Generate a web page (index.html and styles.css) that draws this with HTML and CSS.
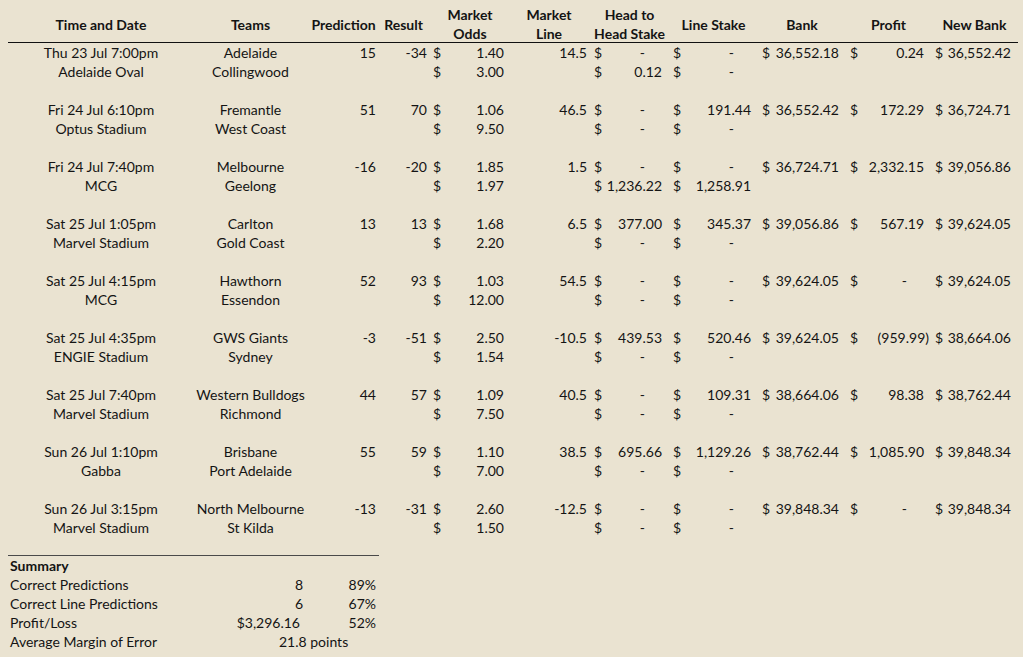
FILE: index.html
```html
<!DOCTYPE html>
<html lang="en">
<head>
<meta charset="utf-8">
<title>Betting tracker</title>
<link rel="stylesheet" href="styles.css">
</head>
<body>
<div class="sheet">
  <div class="row head">
    <div class="c">Time and Date</div>
    <div class="c">Teams</div>
    <div class="c">Prediction</div>
    <div class="c">Result</div>
    <div class="c">Market<br>Odds</div>
    <div class="c">Market<br>Line</div>
    <div class="c">Head to<br>Head Stake</div>
    <div class="c">Line Stake</div>
    <div class="c">Bank</div>
    <div class="c">Profit</div>
    <div class="c">New Bank</div>
  </div>

  <div class="game">
    <div class="row">
      <div class="c ctr">Thu 23 Jul 7:00pm</div><div class="c ctr">Adelaide</div><div class="c num">15</div><div class="c num">-34</div>
      <div class="c acc"><span>$</span><span>1.40</span></div><div class="c num">14.5</div>
      <div class="c acc"><span>$</span><span class="z">-</span></div><div class="c acc"><span>$</span><span class="z">-</span></div>
      <div class="c acc"><span>$</span><span>36,552.18</span></div><div class="c acc"><span>$</span><span>0.24</span></div><div class="c acc"><span>$</span><span>36,552.42</span></div>
    </div>
    <div class="row">
      <div class="c ctr">Adelaide Oval</div><div class="c ctr">Collingwood</div><div class="c"></div><div class="c"></div>
      <div class="c acc"><span>$</span><span>3.00</span></div><div class="c"></div>
      <div class="c acc"><span>$</span><span>0.12</span></div><div class="c acc"><span>$</span><span class="z">-</span></div>
      <div class="c"></div><div class="c"></div><div class="c"></div>
    </div>
  </div>

  <div class="game">
    <div class="row">
      <div class="c ctr">Fri 24 Jul 6:10pm</div><div class="c ctr">Fremantle</div><div class="c num">51</div><div class="c num">70</div>
      <div class="c acc"><span>$</span><span>1.06</span></div><div class="c num">46.5</div>
      <div class="c acc"><span>$</span><span class="z">-</span></div><div class="c acc"><span>$</span><span>191.44</span></div>
      <div class="c acc"><span>$</span><span>36,552.42</span></div><div class="c acc"><span>$</span><span>172.29</span></div><div class="c acc"><span>$</span><span>36,724.71</span></div>
    </div>
    <div class="row">
      <div class="c ctr">Optus Stadium</div><div class="c ctr">West Coast</div><div class="c"></div><div class="c"></div>
      <div class="c acc"><span>$</span><span>9.50</span></div><div class="c"></div>
      <div class="c acc"><span>$</span><span class="z">-</span></div><div class="c acc"><span>$</span><span class="z">-</span></div>
      <div class="c"></div><div class="c"></div><div class="c"></div>
    </div>
  </div>

  <div class="game">
    <div class="row">
      <div class="c ctr">Fri 24 Jul 7:40pm</div><div class="c ctr">Melbourne</div><div class="c num">-16</div><div class="c num">-20</div>
      <div class="c acc"><span>$</span><span>1.85</span></div><div class="c num">1.5</div>
      <div class="c acc"><span>$</span><span class="z">-</span></div><div class="c acc"><span>$</span><span class="z">-</span></div>
      <div class="c acc"><span>$</span><span>36,724.71</span></div><div class="c acc"><span>$</span><span>2,332.15</span></div><div class="c acc"><span>$</span><span>39,056.86</span></div>
    </div>
    <div class="row">
      <div class="c ctr">MCG</div><div class="c ctr">Geelong</div><div class="c"></div><div class="c"></div>
      <div class="c acc"><span>$</span><span>1.97</span></div><div class="c"></div>
      <div class="c acc"><span>$</span><span>1,236.22</span></div><div class="c acc"><span>$</span><span>1,258.91</span></div>
      <div class="c"></div><div class="c"></div><div class="c"></div>
    </div>
  </div>

  <div class="game">
    <div class="row">
      <div class="c ctr">Sat 25 Jul 1:05pm</div><div class="c ctr">Carlton</div><div class="c num">13</div><div class="c num">13</div>
      <div class="c acc"><span>$</span><span>1.68</span></div><div class="c num">6.5</div>
      <div class="c acc"><span>$</span><span>377.00</span></div><div class="c acc"><span>$</span><span>345.37</span></div>
      <div class="c acc"><span>$</span><span>39,056.86</span></div><div class="c acc"><span>$</span><span>567.19</span></div><div class="c acc"><span>$</span><span>39,624.05</span></div>
    </div>
    <div class="row">
      <div class="c ctr">Marvel Stadium</div><div class="c ctr">Gold Coast</div><div class="c"></div><div class="c"></div>
      <div class="c acc"><span>$</span><span>2.20</span></div><div class="c"></div>
      <div class="c acc"><span>$</span><span class="z">-</span></div><div class="c acc"><span>$</span><span class="z">-</span></div>
      <div class="c"></div><div class="c"></div><div class="c"></div>
    </div>
  </div>

  <div class="game">
    <div class="row">
      <div class="c ctr">Sat 25 Jul 4:15pm</div><div class="c ctr">Hawthorn</div><div class="c num">52</div><div class="c num">93</div>
      <div class="c acc"><span>$</span><span>1.03</span></div><div class="c num">54.5</div>
      <div class="c acc"><span>$</span><span class="z">-</span></div><div class="c acc"><span>$</span><span class="z">-</span></div>
      <div class="c acc"><span>$</span><span>39,624.05</span></div><div class="c acc"><span>$</span><span class="z">-</span></div><div class="c acc"><span>$</span><span>39,624.05</span></div>
    </div>
    <div class="row">
      <div class="c ctr">MCG</div><div class="c ctr">Essendon</div><div class="c"></div><div class="c"></div>
      <div class="c acc"><span>$</span><span>12.00</span></div><div class="c"></div>
      <div class="c acc"><span>$</span><span class="z">-</span></div><div class="c acc"><span>$</span><span class="z">-</span></div>
      <div class="c"></div><div class="c"></div><div class="c"></div>
    </div>
  </div>

  <div class="game">
    <div class="row">
      <div class="c ctr">Sat 25 Jul 4:35pm</div><div class="c ctr">GWS Giants</div><div class="c num">-3</div><div class="c num">-51</div>
      <div class="c acc"><span>$</span><span>2.50</span></div><div class="c num">-10.5</div>
      <div class="c acc"><span>$</span><span>439.53</span></div><div class="c acc"><span>$</span><span>520.46</span></div>
      <div class="c acc"><span>$</span><span>39,624.05</span></div><div class="c acc"><span>$</span><span class="neg">(959.99)</span></div><div class="c acc"><span>$</span><span>38,664.06</span></div>
    </div>
    <div class="row">
      <div class="c ctr">ENGIE Stadium</div><div class="c ctr">Sydney</div><div class="c"></div><div class="c"></div>
      <div class="c acc"><span>$</span><span>1.54</span></div><div class="c"></div>
      <div class="c acc"><span>$</span><span class="z">-</span></div><div class="c acc"><span>$</span><span class="z">-</span></div>
      <div class="c"></div><div class="c"></div><div class="c"></div>
    </div>
  </div>

  <div class="game">
    <div class="row">
      <div class="c ctr">Sat 25 Jul 7:40pm</div><div class="c ctr">Western Bulldogs</div><div class="c num">44</div><div class="c num">57</div>
      <div class="c acc"><span>$</span><span>1.09</span></div><div class="c num">40.5</div>
      <div class="c acc"><span>$</span><span class="z">-</span></div><div class="c acc"><span>$</span><span>109.31</span></div>
      <div class="c acc"><span>$</span><span>38,664.06</span></div><div class="c acc"><span>$</span><span>98.38</span></div><div class="c acc"><span>$</span><span>38,762.44</span></div>
    </div>
    <div class="row">
      <div class="c ctr">Marvel Stadium</div><div class="c ctr">Richmond</div><div class="c"></div><div class="c"></div>
      <div class="c acc"><span>$</span><span>7.50</span></div><div class="c"></div>
      <div class="c acc"><span>$</span><span class="z">-</span></div><div class="c acc"><span>$</span><span class="z">-</span></div>
      <div class="c"></div><div class="c"></div><div class="c"></div>
    </div>
  </div>

  <div class="game">
    <div class="row">
      <div class="c ctr">Sun 26 Jul 1:10pm</div><div class="c ctr">Brisbane</div><div class="c num">55</div><div class="c num">59</div>
      <div class="c acc"><span>$</span><span>1.10</span></div><div class="c num">38.5</div>
      <div class="c acc"><span>$</span><span>695.66</span></div><div class="c acc"><span>$</span><span>1,129.26</span></div>
      <div class="c acc"><span>$</span><span>38,762.44</span></div><div class="c acc"><span>$</span><span>1,085.90</span></div><div class="c acc"><span>$</span><span>39,848.34</span></div>
    </div>
    <div class="row">
      <div class="c ctr">Gabba</div><div class="c ctr">Port Adelaide</div><div class="c"></div><div class="c"></div>
      <div class="c acc"><span>$</span><span>7.00</span></div><div class="c"></div>
      <div class="c acc"><span>$</span><span class="z">-</span></div><div class="c acc"><span>$</span><span class="z">-</span></div>
      <div class="c"></div><div class="c"></div><div class="c"></div>
    </div>
  </div>

  <div class="game">
    <div class="row">
      <div class="c ctr">Sun 26 Jul 3:15pm</div><div class="c ctr">North Melbourne</div><div class="c num">-13</div><div class="c num">-31</div>
      <div class="c acc"><span>$</span><span>2.60</span></div><div class="c num">-12.5</div>
      <div class="c acc"><span>$</span><span class="z">-</span></div><div class="c acc"><span>$</span><span class="z">-</span></div>
      <div class="c acc"><span>$</span><span>39,848.34</span></div><div class="c acc"><span>$</span><span class="z">-</span></div><div class="c acc"><span>$</span><span>39,848.34</span></div>
    </div>
    <div class="row">
      <div class="c ctr">Marvel Stadium</div><div class="c ctr">St Kilda</div><div class="c"></div><div class="c"></div>
      <div class="c acc"><span>$</span><span>1.50</span></div><div class="c"></div>
      <div class="c acc"><span>$</span><span class="z">-</span></div><div class="c acc"><span>$</span><span class="z">-</span></div>
      <div class="c"></div><div class="c"></div><div class="c"></div>
    </div>
  </div>

  <div class="summary">
    <div class="srow"><div class="lbl bold">Summary</div><div></div><div></div></div>
    <div class="srow"><div class="lbl">Correct Predictions</div><div class="sv">8</div><div class="sp">89%</div></div>
    <div class="srow"><div class="lbl">Correct Line Predictions</div><div class="sv">6</div><div class="sp">67%</div></div>
    <div class="srow"><div class="lbl">Profit/Loss</div><div class="sv money">$3,296.16</div><div class="sp">52%</div></div>
    <div class="srow"><div class="lbl">Average Margin of Error</div><div class="span2">21.8 points</div></div>
  </div>
</div>
</body>
</html>
```

FILE: styles.css
```css
html, body {
  margin: 0;
  padding: 0;
  background: #eae3d1;
}

body {
  font-family: Lato, "Open Sans", sans-serif;
  font-size: 14px;
  color: #141414;
}

.sheet {
  padding: 5px 0 0 8px;
  width: 1010px;
}

.row {
  display: grid;
  grid-template-columns: 186px 113px 73px 49px 82px 79px 79px 89px 88px 85px 87px;
  height: 19px;
  line-height: 19px;
  white-space: nowrap;
}

.head {
  box-sizing: border-box;
  height: 38px;
  border-bottom: 1px solid #111;
  font-weight: bold;
  line-height: 19px;
}

.head .c {
  display: flex;
  align-items: center;
  justify-content: center;
  text-align: center;
}

.game {
  padding-bottom: 19px;
}

.ctr {
  text-align: center;
}

.num {
  text-align: right;
  padding-right: 4px;
}

.row .c:nth-child(4) {
  padding-right: 2px;
}

.row .c:nth-child(6) {
  padding-right: 3px;
}

.acc {
  display: flex;
  justify-content: space-between;
  padding: 0 7px 0 4px;
}

.z {
  padding-right: 17px;
}

.neg {
  margin-right: -5px;
}

.summary {
  width: 371px;
  margin-top: -1px;
  border-top: 1px solid #4a4a4a;
}

.srow {
  display: grid;
  grid-template-columns: 186px 113px 72px;
  height: 19px;
  line-height: 19px;
  white-space: nowrap;
}

.lbl {
  padding-left: 2px;
}

.bold {
  font-weight: bold;
}

.sv {
  text-align: right;
  padding-right: 4px;
}

.sv.money {
  padding-right: 7px;
}

.sp {
  text-align: right;
  padding-right: 3px;
}

.span2 {
  grid-column: 2 / 4;
  padding-left: 85px;
}
```
